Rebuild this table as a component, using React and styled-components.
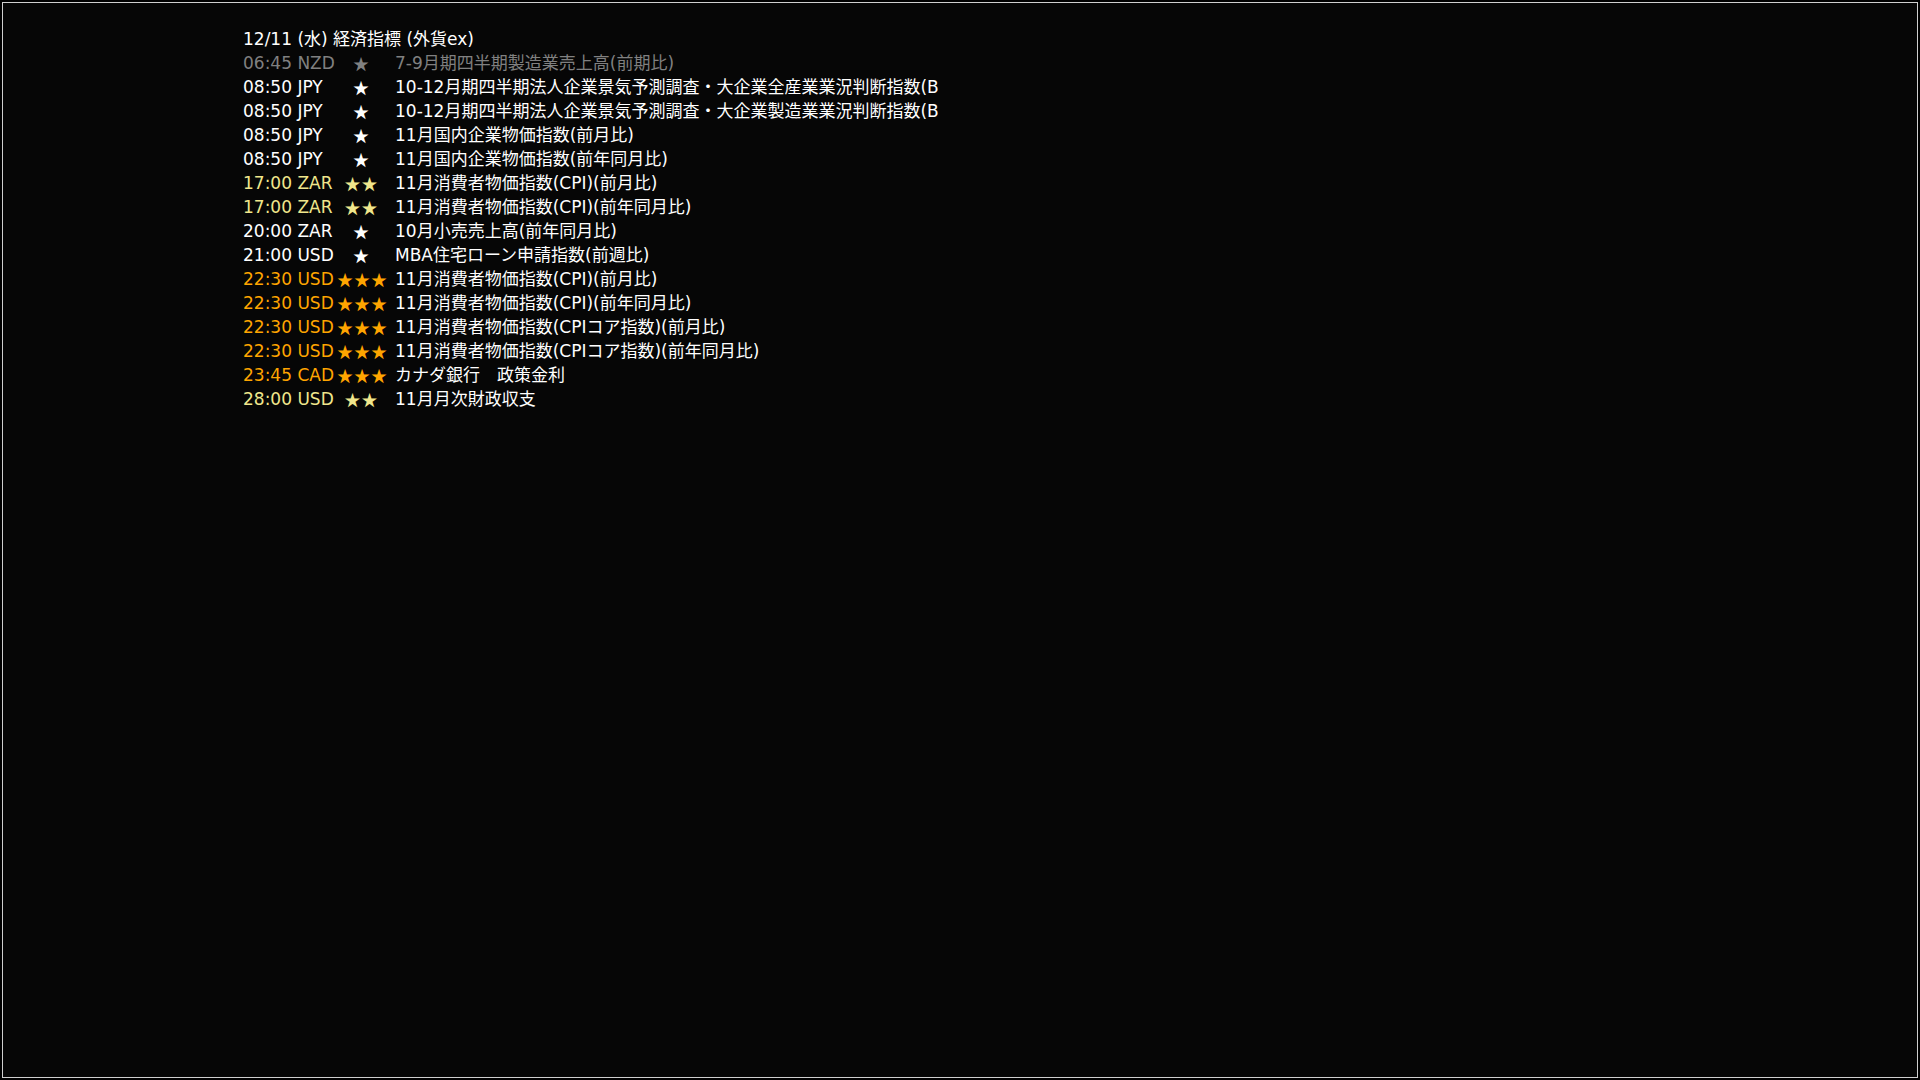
import React from "react";
import styled, { createGlobalStyle } from "styled-components";

const GlobalStyle = createGlobalStyle`
    html, body {
        margin: 0;
        padding: 0;
        background: #000;
    }
    body {
        font-family: "DejaVu Sans", "Noto Sans CJK JP", sans-serif;
    }
`

const Screen = styled.div`
    box-sizing: border-box;
    margin: 2px;
    width: 1916px;
    height: 1076px;
    border: 1px solid #cfcfcf;
    background: #060606;
    padding: 24px 0 0 240px;
`

const Board = styled.div`
    width: 696px;
    overflow: hidden;
    font-size: 17px;
    line-height: 24px;
    color: #fff;
    white-space: nowrap;
`

const Title = styled.div`
    color: #fff;
`

const Row = styled.div`
    display: grid;
    grid-template-columns: 93px 50px 1fr;
    color: ${(p) => p.color};
`

const Time = styled.span`
    color: inherit;
`

const Stars = styled.span`
    font-family: "Noto Sans CJK JP", sans-serif;
    text-align: center;
    font-size: 16px;
    letter-spacing: 1px;
    padding-left: 1px;
`

const Name = styled.span`
    padding-left: 9px;
    overflow: hidden;
    color: ${(p) => (p.$dim ? "#808080" : "#fff")};
`

const colors = {
    0: "#808080",
    1: "#ffffff",
    2: "#f0e68c",
    3: "#ffa500",
}

const events = [
    { time: "06:45 NZD", stars: 1, past: true, name: "7-9月期四半期製造業売上高(前期比)" },
    { time: "08:50 JPY", stars: 1, name: "10-12月期四半期法人企業景気予測調査・大企業全産業業況判断指数(BSI)" },
    { time: "08:50 JPY", stars: 1, name: "10-12月期四半期法人企業景気予測調査・大企業製造業業況判断指数(BSI)" },
    { time: "08:50 JPY", stars: 1, name: "11月国内企業物価指数(前月比)" },
    { time: "08:50 JPY", stars: 1, name: "11月国内企業物価指数(前年同月比)" },
    { time: "17:00 ZAR", stars: 2, name: "11月消費者物価指数(CPI)(前月比)" },
    { time: "17:00 ZAR", stars: 2, name: "11月消費者物価指数(CPI)(前年同月比)" },
    { time: "20:00 ZAR", stars: 1, name: "10月小売売上高(前年同月比)" },
    { time: "21:00 USD", stars: 1, name: "MBA住宅ローン申請指数(前週比)" },
    { time: "22:30 USD", stars: 3, name: "11月消費者物価指数(CPI)(前月比)" },
    { time: "22:30 USD", stars: 3, name: "11月消費者物価指数(CPI)(前年同月比)" },
    { time: "22:30 USD", stars: 3, name: "11月消費者物価指数(CPIコア指数)(前月比)" },
    { time: "22:30 USD", stars: 3, name: "11月消費者物価指数(CPIコア指数)(前年同月比)" },
    { time: "23:45 CAD", stars: 3, name: "カナダ銀行　政策金利" },
    { time: "28:00 USD", stars: 2, name: "11月月次財政収支" },
]

const App = () => {
    return (
        <>
            <GlobalStyle />
            <Screen>
                <Board>
                    <Title>12/11 (水) 経済指標 (外貨ex)</Title>
                    {events.map((e, i) => (
                        <Row key={i} color={e.past ? colors[0] : colors[e.stars]}>
                            <Time>{e.time}</Time>
                            <Stars>{"★".repeat(e.stars)}</Stars>
                            <Name $dim={e.past}>{e.name}</Name>
                        </Row>
                    ))}
                </Board>
            </Screen>
        </>
    )
}

export default App;
